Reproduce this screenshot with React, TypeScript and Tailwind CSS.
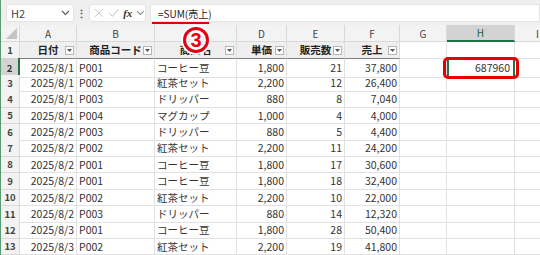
import React from "react";

const GRID = "grid grid-cols-[19px_57px_78px_82px_50px_58px_55px_47px_68px_46px]";
const FONT = { fontFamily: '"Noto Sans CJK JP", "Noto Sans", sans-serif' };

const rows: [string, string, string, string, string, string][] = [
  ["2025/8/1", "P001", "コーヒー豆", "1,800", "21", "37,800"],
  ["2025/8/1", "P002", "紅茶セット", "2,200", "12", "26,400"],
  ["2025/8/1", "P003", "ドリッパー", "880", "8", "7,040"],
  ["2025/8/1", "P004", "マグカップ", "1,000", "4", "4,000"],
  ["2025/8/2", "P003", "ドリッパー", "880", "5", "4,400"],
  ["2025/8/2", "P002", "紅茶セット", "2,200", "11", "24,200"],
  ["2025/8/2", "P001", "コーヒー豆", "1,800", "17", "30,600"],
  ["2025/8/2", "P001", "コーヒー豆", "1,800", "18", "32,400"],
  ["2025/8/2", "P002", "紅茶セット", "2,200", "10", "22,000"],
  ["2025/8/2", "P003", "ドリッパー", "880", "14", "12,320"],
  ["2025/8/3", "P001", "コーヒー豆", "1,800", "28", "50,400"],
  ["2025/8/3", "P002", "紅茶セット", "2,200", "19", "41,800"],
];

function Drop() {
  return (
    <div className="absolute right-[2px] top-[4px] w-[9px] h-[9px] border border-[#b5b5b5] bg-white flex items-center justify-center">
      <svg width="5" height="3" viewBox="0 0 5 3">
        <path d="M0 0 L5 0 L2.5 3 Z" fill="#555" />
      </svg>
    </div>
  );
}

function Chevron({ color = "#555" }: { color?: string }) {
  return (
    <svg width="9" height="6" viewBox="0 0 9 6" fill="none">
      <path d="M1 1 L4.5 4.5 L8 1" stroke={color} strokeWidth="1.1" />
    </svg>
  );
}

export default function App() {
  const heads = ["日付", "商品コード", "商品名", "単価", "販売数", "売上"];
  const letters = ["A", "B", "C", "D", "E", "F", "G", "H", "I"];
  return (
    <div className="relative w-[540px] h-[255px] overflow-hidden bg-white border-l border-[#5a9c73]" style={FONT}>
      {/* formula bar */}
      <div className="h-[25px] bg-[#efefef] flex items-start pt-[4px] pl-[5px]">
        <div className="w-[68px] h-[18px] bg-white rounded-[3px] border border-[#e3e3e3] flex items-center pl-[4px] pr-[3px] justify-between">
          <span className="text-[11px] text-[#444]">H2</span>
          <Chevron />
        </div>
        <div className="w-[15px] h-[18px] flex items-center justify-center text-[#555] text-[11px] font-bold">⋮</div>
        <div className="w-[57px] h-[18px] bg-white rounded-[3px] border border-[#e3e3e3] flex items-center pl-[4px] gap-[4px]">
          <svg width="10" height="10" viewBox="0 0 10 10"><path d="M1 1 L9 9 M9 1 L1 9" stroke="#bdbdbd" strokeWidth="1" /></svg>
          <svg width="12" height="10" viewBox="0 0 12 10"><path d="M1 5 L4.5 8.5 L11 1" stroke="#bdbdbd" strokeWidth="1" fill="none" /></svg>
          <span className="text-[11px] italic font-bold text-[#333] leading-none" style={{ fontFamily: '"Liberation Serif", serif' }}>fx</span>
          <Chevron color="#888" />
        </div>
        <div className="relative ml-[4px] flex-1 h-[18px] bg-white rounded-l-[3px] border border-[#e3e3e3] flex items-center pl-[7px]">
          <span className="text-[10px] text-[#222]">=SUM(売上)</span>
          <div className="absolute left-[1px] top-[17px] w-[57px] h-[2px] bg-[#e00000]" />
        </div>
      </div>

      {/* column header */}
      <div className={`${GRID} h-[17px] bg-[#f3f3f3]`}>
        <div className="relative border-r border-b border-[#d9d9d9]">
          <svg className="absolute right-[2px] bottom-[2px]" width="11" height="11" viewBox="0 0 11 11">
            <path d="M11 0 L11 11 L0 11 Z" fill="#c4c4c4" />
          </svg>
        </div>
        {letters.map((l) => (
          <div
            key={l}
            className={
              l === "H"
                ? "flex items-center justify-center text-[10px] text-[#2b5e3f] bg-[#d3d3d3] border-r border-[#d9d9d9] border-b-2 border-b-[#217346]"
                : "flex items-center justify-center text-[10px] text-[#444] border-r border-b border-[#d9d9d9]"
            }
          >
            {l}
          </div>
        ))}
      </div>

      {/* row 1 */}
      <div className={`${GRID} h-[16.4px]`}>
        <div className="flex items-center justify-center text-[9.5px] font-bold text-[#444] bg-[#f3f3f3] border-r border-b border-[#d9d9d9]">1</div>
        {heads.map((h) => (
          <div key={h} className="relative flex items-center justify-center text-[10.5px] font-bold text-[#222] bg-[#efefef] border-r border-[#dedede] border-b border-b-[#7f7f7f]">
            <span>{h}</span>
            <Drop />
          </div>
        ))}
        <div className="border-r border-b border-[#e1e1e1]" />
        <div className="border-r border-b border-[#e1e1e1]" />
        <div className="border-r border-b border-[#e1e1e1]" />
      </div>

      {/* data rows */}
      {rows.map((r, i) => {
        const n = i + 2;
        const sel = n === 2;
        return (
          <div key={n} className={`${GRID} h-[16.4px] text-[10.5px] text-[#333]`}>
            <div
              className={
                sel
                  ? "flex items-center justify-center text-[9.5px] font-bold text-[#333] bg-[#d3d3d3] border-b border-[#d9d9d9] border-r-2 border-r-[#217346]"
                  : "flex items-center justify-center text-[9.5px] font-bold text-[#444] bg-[#f3f3f3] border-r border-b border-[#d9d9d9]"
              }
            >
              {n}
            </div>
            <div className="flex items-center justify-end pr-[2px] border-r border-b border-[#e1e1e1]">{r[0]}</div>
            <div className="flex items-center pl-[2px] border-r border-b border-[#e1e1e1]">{r[1]}</div>
            <div className="flex items-center pl-[2px] border-r border-b border-[#e1e1e1]">{r[2]}</div>
            <div className="flex items-center justify-end pr-[2px] border-r border-b border-[#e1e1e1]">{r[3]}</div>
            <div className="flex items-center justify-end pr-[2px] border-r border-b border-[#e1e1e1]">{r[4]}</div>
            <div className="flex items-center justify-end pr-[2px] border-r border-b border-[#e1e1e1]">{r[5]}</div>
            <div className="border-r border-b border-[#e1e1e1]" />
            <div className={sel ? "relative flex items-center justify-end pr-[3px] border-2 border-[#217346]" : "border-r border-b border-[#e1e1e1]"}>
              {sel ? "687960" : null}
            </div>
            <div className="border-r border-b border-[#e1e1e1]" />
          </div>
        );
      })}

      {/* annotations */}
      <div className="absolute left-[442px] top-[57px] w-[76px] h-[22px] rounded-[5px] border-[3px] border-[#e60000]" />
      <svg className="absolute left-[179px] top-[24px]" width="32" height="32" viewBox="0 0 32 32">
        <circle cx="16" cy="16" r="11.5" fill="none" stroke="white" strokeWidth="7" />
        <circle cx="16" cy="16" r="11.5" fill="none" stroke="#e60012" strokeWidth="3" />
        <text x="16" y="23" textAnchor="middle" fontSize="20" fontWeight="bold" fill="#e60012" stroke="white" strokeWidth="3" paintOrder="stroke" style={{ fontFamily: '"Liberation Sans", sans-serif' }}>3</text>
      </svg>
    </div>
  );
}
